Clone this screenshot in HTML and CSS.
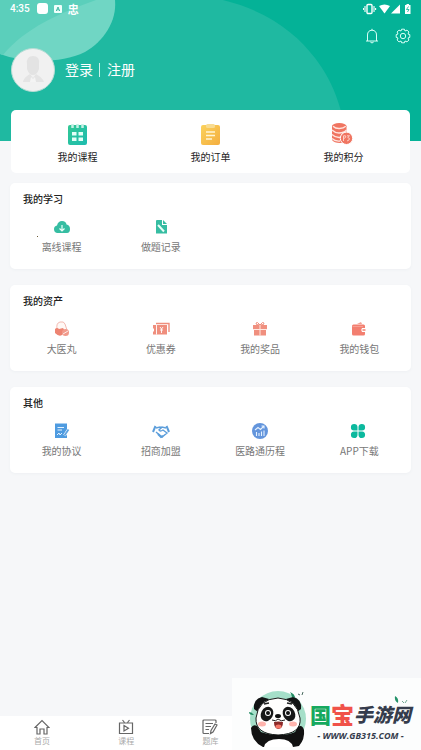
FILE: index.html
```html
<!DOCTYPE html>
<html lang="zh-CN">
<head>
<meta charset="utf-8">
<meta name="viewport" content="width=device-width, initial-scale=1">
<title>我的</title>
<link rel="stylesheet" href="styles.css">
</head>
<body>
<header class="hero">
  <svg class="hero-art" viewBox="0 0 421 141" preserveAspectRatio="xMinYMin slice" aria-hidden="true">
    <path d="M0 0H223C268 11 297 34 315 58C332 80 342 105 347 141H0Z" fill="#1fb9a1"/>
    <path d="M0 0H115C117 21 104 41 85 52C60 64 24 63 0 54Z" fill="#70d6c4"/>
    <path d="M0 0H96C60 13 25 28 3 55L0 54Z" fill="#5bcfbb"/>
  </svg>
  <div class="status">
    <span class="clock">4:35</span>
    <span class="chip"></span>
    <svg class="tiny" width="8" height="8" viewBox="0 0 8 8"><rect width="8" height="8" rx="1" fill="#effffb"/><path d="M2.3 6L4 2L5.7 6M3 4.8H5" fill="none" stroke="#42b9a5"/></svg>
    <span class="glyph">忠</span>
    <svg class="signals" width="50" height="12" viewBox="0 0 50 12" fill="#fff">
      <rect x="4" y="1.5" width="5" height="9" rx="1" fill="none" stroke="#fff" stroke-width="1.4"/><path d="M2 3V9M11 3V9M.4 5V7M12.6 5V7" stroke="#fff" stroke-width="1.1"/>
      <path d="M16 3Q21.500 0 27 3L21.500 10.500Z"/><path d="M37 1.500V10.500H28Z"/>
      <path d="M42 2H43.500V1H46V2H47.500V11H42Z"/><path d="M45.500 3.500L43.500 6.500H46L44.500 9" fill="none" stroke="#04b297" stroke-width=".8"/>
    </svg>
  </div>
  <div class="actions">
    <button class="icon-btn" aria-label="消息"><svg width="16" height="16" viewBox="0 0 16 16"><path d="M2 13H14M3.500 13V7Q3.500 2.500 8 2.200Q12.500 2.500 12.500 7V13M8 2.200V.8M6.300 14Q8 16 9.700 14" /></svg></button>
    <button class="icon-btn" aria-label="设置"><svg width="16" height="16" viewBox="0 0 16 16"><path d="M6.600 1.200H9.400L10 3L12 2.100L13.900 4L13 6L14.800 6.600V9.400L13 10L13.900 12L12 13.900L10 13L9.400 14.800H6.600L6 13L4 13.900L2.100 12L3 10L1.200 9.400V6.600L3 6L2.100 4L4 2.100L6 3Z"/><circle cx="8" cy="8" r="2.700"/></svg></button>
  </div>
  <div class="profile">
    <svg class="avatar" width="44" height="44" viewBox="0 0 44 44"><circle cx="22" cy="22" r="21.500" fill="#f1f1f1" stroke="#b9dcd5"/><path d="M16 16Q15 8 22 8Q29 8 28 16L28 21Q26 27 22 27Q18 27 16 21Z" fill="#e3e3e3"/><path d="M12 34Q13 29 19 26L22 30L25 26Q31 29 33 34Z" fill="#e4e4e4"/><path d="M20 29L22 31L24 29L25 34H19Z" fill="#f4f4f4"/></svg>
    <a class="auth" href="#login">登录</a><span class="bar"></span><a class="auth" href="#register">注册</a>
  </div>
</header>

<main class="content">
  <nav class="card quick">
    <a class="quick-item" href="#courses">
      <svg width="22" height="22" viewBox="0 0 22 22"><defs><linearGradient id="g1" x2="1" y2="1"><stop stop-color="#32c894"/><stop offset="1" stop-color="#1dbcb0"/></linearGradient></defs><rect x="1" y="2" width="19" height="20" rx="2" fill="url(#g1)"/><path d="M5.500 1V5M10.500 1V5M15.500 1V5" stroke="#c5f1e6" stroke-width="2.500"/><path d="M5 9H9.500V12.500H5ZM11.500 9H16V12.500H11.500ZM5 14.500H9.500V18H5ZM11.500 14.500H16V18H11.500Z" fill="#e4fff7"/></svg>
      <span>我的课程</span></a>
    <a class="quick-item" href="#orders">
      <svg width="22" height="22" viewBox="0 0 22 22"><defs><linearGradient id="g2" x2="1" y2="1"><stop stop-color="#fbd25c"/><stop offset="1" stop-color="#f4ae40"/></linearGradient></defs><rect x="1" y="2" width="19" height="20" rx="2" fill="url(#g2)"/><rect x="6" y="1" width="9" height="4" rx="1.500" fill="#f8dc92"/><path d="M6 9H15M6 12.500H15M6 16H12" stroke="#fff5d5" stroke-width="1.600"/></svg>
      <span>我的订单</span></a>
    <a class="quick-item points" href="#points">
      <svg width="26" height="22" viewBox="0 0 26 22"><path d="M1 3V17Q3 20 9 20Q14 20 15.500 17V3Z" fill="#f07561"/><ellipse cx="8.250" cy="3" rx="7.250" ry="3" fill="#f07561"/><path d="M2 3.200Q4.500 5.700 8.500 5.500Q12.500 5.500 14.800 3.200M1 7Q4 10 8 10Q13 10 15.500 7M1 11.500Q4 14.500 8 14.500Q13 14.500 15.500 11.500M1 15.500Q4 18.500 9 18" fill="none" stroke="#ffe5df" stroke-width="1.300"/><circle cx="15.500" cy="15.300" r="6.200" fill="#f07561" stroke="#fff"/><path d="M12.500 18V12.800H14.500Q16 14 13 15.500M16 12.800H18.500L16.700 14.500Q19.500 15 18 17L16 18" fill="none" stroke="#ffd7ce" stroke-width=".9"/></svg>
      <span>我的积分</span></a>
  </nav>

  <section class="card group">
    <h2>我的学习</h2>
    <div class="grid">
      <a class="item marked" href="#offline"><svg width="18" height="18" viewBox="0 0 18 18"><path d="M4 15Q1 14.500 1 11Q1 8 4 7.500Q5 3 9 3Q13 3 13.500 6.500Q17 7 17 11Q17 15 14 15Z" fill="#36bda2"/><path d="M9 7V12.500M6.500 10.500L9 13L11.500 10.500" fill="none" stroke="#eafff9" stroke-width="1.200"/></svg><span>离线课程</span></a>
      <a class="item" href="#records"><svg width="18" height="18" viewBox="0 0 18 18"><path d="M5 2H10V7H15V15.500H4V3Q4 2 5 2ZM11 2L15 6H11Z" fill="#36bda2"/><path d="M6 7L12 13.500" stroke="#e9fff8" stroke-width="2"/></svg><span>做题记录</span></a>
    </div>
  </section>

  <section class="card group">
    <h2>我的资产</h2>
    <div class="grid">
      <a class="item" href="#pills"><svg width="18" height="18" viewBox="0 0 18 18"><path d="M4 9Q3 3 7 2Q11 1 12 4L14 10" fill="#fff8f5" stroke="#f0aaa0" stroke-width=".8"/><path d="M2 9Q4 7 6 9L10 8L12 11L9 15Q6 17 2 13Z" fill="#ed8472"/><circle cx="12.500" cy="12.500" r="3.500" fill="#f19a8b"/><path d="M10 14L15 11" stroke="#fff" stroke-width=".8"/></svg><span>大医丸</span></a>
      <a class="item" href="#coupons"><svg width="18" height="18" viewBox="0 0 18 18"><path d="M4 3.500H17V12" fill="none" stroke="#ef8e7d" stroke-width="1.400"/><path d="M1 5H15V14.500H1V12L2 11V9L1 8Z" fill="#ef8e7d"/><path d="M4.500 5V14.500M8 7L9.500 9L11 7M9.500 9V13M8 10H11" fill="none" stroke="#fff" stroke-width=".9"/></svg><span>优惠券</span></a>
      <a class="item" href="#prizes"><svg width="18" height="18" viewBox="0 0 18 18"><path d="M2 5H16V9H2ZM3 10H15V15.500H3Z" fill="#f0907f"/><path d="M9 5Q4 5 5 3Q6 1 9 5Q12 1 13 3Q14 5 9 5" fill="none" stroke="#f0907f"/><path d="M9 5V15.500M2 9.500H16" stroke="#ffe9e2" stroke-width="1"/></svg><span>我的奖品</span></a>
      <a class="item" href="#wallet"><svg width="18" height="18" viewBox="0 0 18 18"><path d="M7 4L11 2L12 4Z" fill="#f3a193"/><rect x="2" y="4.500" width="13" height="11" rx="1.500" fill="#f37f70"/><path d="M2.500 6.500H13" stroke="#f8ada2" stroke-width=".7"/><path d="M16 8H12Q10.500 10 12 12H16Z" fill="#fff"/><rect x="12.500" y="9" width="3" height="2" fill="#f3a193"/></svg><span>我的钱包</span></a>
    </div>
  </section>

  <section class="card group">
    <h2>其他</h2>
    <div class="grid">
      <a class="item" href="#agreements"><svg width="18" height="18" viewBox="0 0 18 18"><path d="M2 1.500H14V16H2Z" fill="#4e9be0"/><path d="M4.500 5.500H11M4.500 8H9M4 13L6 11L7 13L9 11" fill="none" stroke="#e2f1ff"/><path d="M15.500 7.500L11.500 13.500" stroke="#fff" stroke-width="3"/><path d="M15.500 7.500L11.500 13.500" stroke="#5ea2df" stroke-width="1.800"/></svg><span>我的协议</span></a>
      <a class="item" href="#join"><svg width="18" height="18" viewBox="0 0 18 18" fill="none" stroke="#5c9edb" stroke-width="1.400"><path d="M1 10L3.500 4M17 10L14.500 4" stroke-width="2"/><path d="M4 6L8 5L10 6M14 6L10 5L7 8Q8 10 11 8L15 11L10 15L4 10"/><path d="M6 12L9 15L11 14" stroke-width="2"/></svg><span>招商加盟</span></a>
      <a class="item" href="#history"><svg width="18" height="18" viewBox="0 0 18 18"><circle cx="9" cy="9" r="8" fill="#6395dc"/><path d="M4 8L7 5.500L9.500 7.500L13 4M10.500 4H13V6.500M5.500 14V10M8 14V11M10.500 14V9.500M13 14V8.500" fill="none" stroke="#e5f1ff" stroke-width="1.100"/></svg><span>医路通历程</span></a>
      <a class="item" href="#app"><svg width="18" height="18" viewBox="0 0 18 18" fill="#0cb99e"><path d="M7.500 8.500H4A3.300 3.300 0 1 1 7.500 5ZM8.500 8.500V5A3.300 3.300 0 1 1 12 8.500ZM7.500 9.500V13A3.300 3.300 0 1 1 4 9.500ZM8.500 9.500H12A3.300 3.300 0 1 1 8.500 13Z"/></svg><span>APP下载</span></a>
    </div>
  </section>
</main>

<nav class="tabs">
  <a class="tab" href="#home"><svg width="16" height="16" viewBox="0 0 16 16"><path d="M1 8.500L8 1.500L15 8.500H13V15H10V10H6V15H3V8.500Z"/></svg><span>首页</span></a>
  <a class="tab" href="#course"><svg width="16" height="16" viewBox="0 0 16 16"><path d="M1.500 4H14.500V14.500H1.500ZM4.500 1L6.500 3.500M11.500 1L9.500 3.500M6 6.500L10.500 9.200L6 12Z"/></svg><span>课程</span></a>
  <a class="tab" href="#bank"><svg width="16" height="16" viewBox="0 0 16 16"><path d="M14 4V2Q14 1 13 1H2Q1 1 1 2V13.500Q1 14.500 2 14.500H7M3.500 4.500H11M3.500 7.500H9M3.500 10.500H7M13 5L15 6L11 13L8.500 14.500L9 11.500Z"/></svg><span>题库</span></a>
</nav>

<aside class="brand">
  <svg class="panda" width="60" height="56" viewBox="0 0 60 56">
    <circle cx="29" cy="28" r="28" fill="#a5dfc9"/>
    <path d="M43 6Q42 2 41 1Q46 3 46 7M4 24Q0 24 0 21Q3 21 5 24" fill="#218b62"/><path d="M49 3L51 4M53 4L54 1" stroke="#47685d"/>
    <path d="M5 18Q4 8 13 6L20 8L9 21Z" fill="#121314"/><path d="M52 18Q53 8 44 6L37 8L48 21Z" fill="#121314"/>
    <path d="M7 27Q9 8 29 7Q48 8 51 27Q53 43 29 44Q6 43 7 27Z" fill="#fffefd" stroke="#171717"/>
    <path d="M2 37Q4 33 8 35L12 41Q20 44 30 44Q40 44 46 41L49 36Q53 33 55 39Q56 48 50 55L44 56H14Q2 50 2 37Z" fill="#111"/>
    <path d="M15 56Q17 48 30 48Q42 48 44 56Z" fill="#fff"/>
    <ellipse cx="18" cy="23" rx="6" ry="7.500" transform="rotate(28 18 23)" fill="#171717"/><ellipse cx="40" cy="23" rx="6" ry="7.500" transform="rotate(-28 40 23)" fill="#171717"/>
    <circle cx="19" cy="22" r="3" fill="#fff"/><circle cx="39" cy="22" r="3" fill="#fff"/><circle cx="19" cy="22" r="2" fill="#111"/><circle cx="39" cy="22" r="2" fill="#111"/>
    <path d="M15 13L20 12M38 12L43 13" stroke="#222" stroke-width="1.500"/><ellipse cx="29" cy="25" rx="3" ry="2" fill="#111"/><path d="M23 29Q27 31 29 28Q32 31 36 29" fill="none" stroke="#222"/><path d="M25 31Q29 30 34 31Q34 38 29 38Q25 37 25 31Z" fill="#8a2928"/><ellipse cx="29.500" cy="35.500" rx="3" ry="2" fill="#f57668"/>
    <ellipse cx="13" cy="33" rx="4" ry="2.500" fill="#ffb3ac"/><ellipse cx="44" cy="33" rx="4" ry="2.500" fill="#ffb3ac"/>
  </svg>
  <div class="brand-copy">
    <div class="brand-name"><span class="guo">国</span><span class="bao">宝</span><span class="rest">手游网</span></div>
    <div class="brand-url">- WWW.GB315.COM -</div>
  </div>
  <svg class="leaf" width="14" height="10" viewBox="0 0 14 10"><path d="M1 1Q5 3 4 8Q0 6 1 1Z" fill="#24936a"/><path d="M8 6L10 8M11 8L13 5" stroke="#72a894"/></svg>
</aside>
</body>
</html>
```
FILE: styles.css
```css
* { box-sizing: border-box; }

body {
  margin: 0;
  min-height: 100vh;
  display: flex;
  flex-direction: column;
  background: #f6f7f9;
  color: #333;
  font: 10px/14px "Noto Sans CJK SC", sans-serif;
}

a { color: inherit; text-decoration: none; }
svg { display: block; flex: none; }

.hero {
  position: relative;
  padding-bottom: 49px;
  background: #04b297;
  color: #fff;
}
.hero-art { position: absolute; inset: 0; width: 100%; height: 100%; }

.status {
  position: relative;
  display: flex;
  align-items: center;
  height: 17px;
  padding: 0 8px 0 10px;
}
.clock { font: 500 10px/14px Roboto, sans-serif; }
.chip { width: 11px; height: 11px; margin: 0 6px 0 7px; border-radius: 3px; background: #fff; }
.glyph { margin-left: 6px; font-size: 11px; font-weight: 700; }
.signals { margin-left: auto; }

.actions {
  position: relative;
  display: flex;
  justify-content: flex-end;
  gap: 15px;
  padding: 11px 10px 0;
}
.icon-btn { padding: 0; border: 0; background: none; }
.icon-btn svg { fill: none; stroke: #d9fff7; stroke-width: 1; }

.profile {
  position: relative;
  display: flex;
  align-items: center;
  margin-top: 4px;
  padding-left: 11px;
}
.avatar { margin-right: 10px; }
.auth { font-size: 14px; line-height: 20px; padding-bottom: 2px; }
.bar { width: 1px; height: 14px; margin: 0 7px 0 6px; background: #c9f2ea; }

.content { flex: 1; padding: 0 10px; }
.card { background: #fff; border-radius: 5px; box-shadow: 0 1px 3px #eef0f3; }

.quick {
  position: relative;
  display: grid;
  grid-template-columns: repeat(3, 1fr);
  margin: -31px 1px 10px;
  padding: 13px 0 9px;
  box-shadow: none;
  color: #222;
}
.quick-item { display: flex; flex-direction: column; align-items: center; gap: 5px; }

.group { margin-bottom: 16px; padding: 9px 2px 15px; }
.group h2 { margin: 0 0 12px 11px; font-size: 10px; line-height: 14px; font-weight: 500; color: #222; }
.grid { display: grid; grid-template-columns: repeat(4, 1fr); }
.item {
  position: relative;
  display: flex;
  flex-direction: column;
  align-items: center;
  gap: 4px;
  color: #777;
}
.marked::before {
  content: "";
  position: absolute;
  left: 25px;
  top: 18px;
  width: 1px;
  height: 1px;
  background: #6b5a35;
}

.tabs {
  display: grid;
  grid-template-columns: repeat(5, 1fr);
  height: 34px;
  padding-top: 3px;
  background: #fff;
}
.tab { display: flex; flex-direction: column; align-items: center; font-size: 8px; line-height: 12px; color: #aaa; }
.tab svg { fill: none; stroke: #666; stroke-width: 1.2; }

.brand {
  position: fixed;
  right: 0;
  bottom: 0;
  display: flex;
  align-items: flex-start;
  width: 189px;
  height: 72px;
  padding: 13px 0 0 17px;
  background: #fcfdfd;
}
.brand-copy { margin: 10px 0 0 1px; }
.brand-name { display: flex; align-items: center; height: 26px; font-weight: 900; white-space: nowrap; }
.guo { font-size: 21px; color: #16a95f; }
.bao { font-size: 23px; color: #f05249; }
.rest { font-size: 19px; font-style: italic; color: #353c4c; }
.brand-url { margin-top: 3px; font: italic 700 9px/12px "Open Sans", sans-serif; color: #353c4c; text-align: center; white-space: nowrap; }
.leaf { position: absolute; right: 13px; top: 17px; }
```
